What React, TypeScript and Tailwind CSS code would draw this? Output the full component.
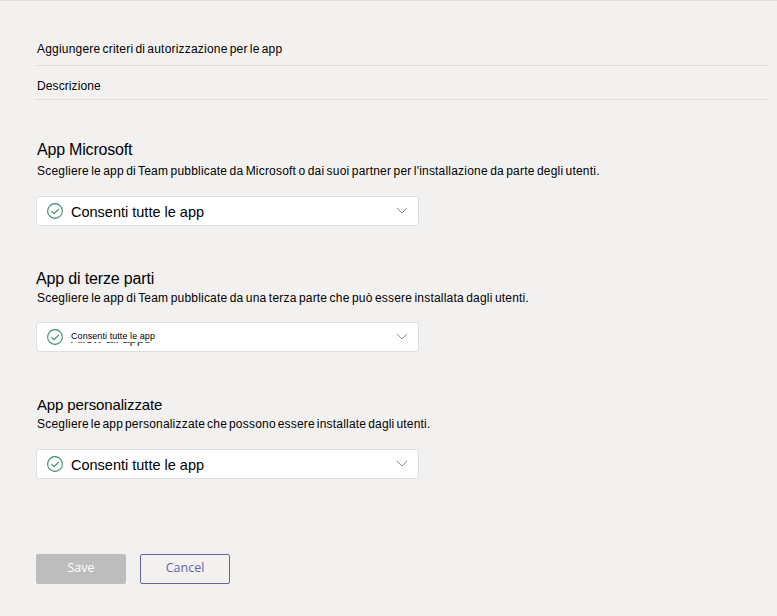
import React from "react";

function CheckCircle() {
  return (
    <svg className="h-4 w-4 shrink-0" viewBox="0 0 16 16" fill="none" stroke="#3c8a63">
      <circle cx="8" cy="8" r="7.4" strokeWidth="1.1" />
      <path d="M4.4 8.1 7 10.7 11.9 5.8" strokeWidth="1.1" />
    </svg>
  );
}

function Chevron() {
  return (
    <svg className="mb-[2px] h-[7px] w-3 shrink-0" viewBox="0 0 12 7" fill="none" stroke="#8b8a91">
      <path d="M.8.8 6 6 11.2.8" strokeWidth="1" />
    </svg>
  );
}

function Select({ children }: { children: React.ReactNode }) {
  return (
    <div className="flex h-[30px] w-[383px] items-center rounded-[3px] border border-[#dedddd] bg-white pr-[10px] pl-[10px]">
      <CheckCircle />
      <div className="ml-2 flex-1">{children}</div>
      <Chevron />
    </div>
  );
}

const description = "ml-px h-[18px] whitespace-nowrap text-[12px] leading-[18px] tracking-[0.2px]";
const heading = "h-6 whitespace-nowrap leading-6";
const option = "block pt-[2px] text-[14.5px] leading-[26px] whitespace-nowrap";

export default function App() {
  return (
    <main className="h-[616px] w-[777px] overflow-hidden border-t border-[#dedddc] bg-[#f3f1f0] pl-9 font-['Liberation_Sans',Arial,sans-serif] text-black">
      <div className="mr-[9px] h-[65px] border-b border-[#dedddc] pt-[39px] pl-px text-[12px] leading-[18px] tracking-[0.2px] [word-spacing:-1.37px]">
        <span className="whitespace-nowrap">Aggiungere criteri di autorizzazione per le app</span>
      </div>
      <div className="mr-[9px] h-[34px] border-b border-[#dedddc] pt-[11px] pl-px text-[12px] leading-[18px] tracking-[0.1px]">
        <span>Descrizione</span>
      </div>

      <section className="pt-[38px]">
        <h2 className={heading + " ml-px text-[16px] tracking-[-0.2px]"}><span>App Microsoft</span></h2>
        <p className={description + " [word-spacing:-1.2px]"}>
          <span>Scegliere le app di Team pubblicate da Microsoft o dai suoi partner per l'installazione da parte degli utenti.</span>
        </p>
        <div className="mt-4">
          <Select><span className={option}>Consenti tutte le app</span></Select>
        </div>
      </section>

      <section className="pt-[41px]">
        <h2 className={heading + " text-[16px] tracking-[-0.16px]"}><span>App di terze parti</span></h2>
        <p className={description + " -mt-[2px] [word-spacing:-1.17px]"}>
          <span>Scegliere le app di Team pubblicate da una terza parte che può essere installata dagli utenti.</span>
        </p>
        <div className="mt-[15px]">
          <Select>
            <div className="relative h-7">
              <span className="block text-[9px] leading-[27px] tracking-[0.07px] whitespace-nowrap">Consenti tutte le app</span>
              <span className="absolute top-[19px] left-0 flex h-[4px] overflow-hidden text-[13px] leading-[5px] whitespace-nowrap text-[#333]">
                <span className="-translate-y-[6px]">Allow all apps</span>
              </span>
            </div>
          </Select>
        </div>
      </section>

      <section className="pt-[41px]">
        <h2 className={heading + " ml-px text-[15px] tracking-[-0.13px]"}><span>App personalizzate</span></h2>
        <p className={description + " -mt-[2px] [word-spacing:-1.6px]"}>
          <span>Scegliere le app personalizzate che possono essere installate dagli utenti.</span>
        </p>
        <div className="mt-4">
          <Select><span className={option}>Consenti tutte le app</span></Select>
        </div>
      </section>

      <div className="mt-[75px] flex gap-[14px] font-['Open_Sans','Noto_Sans',sans-serif] text-[12.5px]">
        <button className="h-[30px] w-[90px] rounded-[2px] bg-[#bdbdbd] pb-[2px] text-white">Save</button>
        <button className="h-[30px] w-[90px] rounded-[2px] border border-[#6264a7] pb-[2px] text-[#6264a7]">Cancel</button>
      </div>
    </main>
  );
}
